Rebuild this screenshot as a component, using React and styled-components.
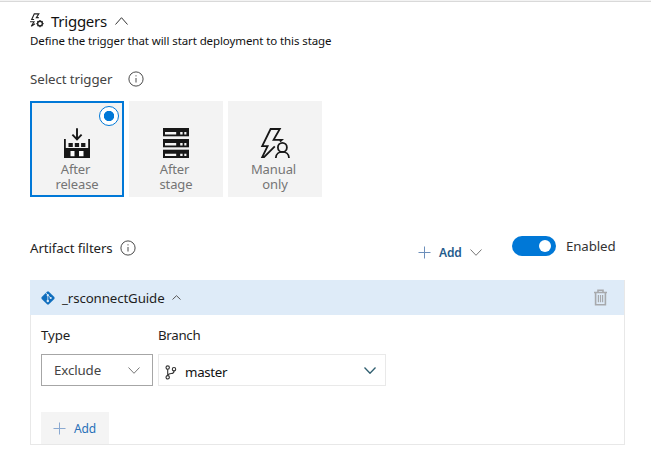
import React from "react";
import styled, { createGlobalStyle, css } from "styled-components";

const GlobalStyle = createGlobalStyle`
  *, *::before, *::after { box-sizing: border-box; }
  body { margin: 0; background: #fff; }
  button { font: inherit; border: 0; padding: 0; background: none; text-align: inherit; }
  svg { display: block; flex: none; }
`;

const Page = styled.main`
  height: 466px;
  overflow: hidden;
  padding: 0 26px 0 30px;
  border-top: 1px solid #f3f3f3;
  background: #fff;
  color: #1e1e1e;
  font: 13.3px/20px "Noto Sans", "Open Sans", sans-serif;
  box-shadow: inset 0 1px #d9d9d9;
`;

const Text = styled.span`
  flex: none;
  white-space: nowrap;
  font-size: ${(p) => p.$size || 13.3}px;
  letter-spacing: ${(p) => p.$track ?? -0.12}px;
  color: ${(p) => p.$color || "inherit"};
  font-weight: ${(p) => p.$weight || 400};
`;

const Heading = styled.header`
  display: flex;
  align-items: center;
  height: 39px;
  color: #111;
  ${Text} { margin: 0 8px 0 7px; }
`;

const Description = styled.p`
  margin: -10px 0 0;
  height: 20px;
  color: #111;
`;

const TriggerLabel = styled.div`
  display: flex;
  align-items: center;
  gap: 16px;
  height: 20px;
  margin-top: 19px;
`;

const Cards = styled.div`
  display: flex;
  gap: 5px;
  margin-top: 12px;
`;

const Card = styled.button`
  position: relative;
  display: flex;
  flex-direction: column;
  align-items: center;
  width: 94px;
  height: 96px;
  padding-top: 26px;
  background: #f3f3f3;
  color: #757575;
  text-align: center;
  line-height: 15px;
  ${(p) => p.$selected && css`box-shadow: inset 0 0 0 2px #0078d7;`}
`;

const CardLabel = styled.span`
  display: flex;
  flex-direction: column;
  align-items: center;
  margin-top: 4px;
  ${Text}:first-child { padding-right: 3px; }
`;

const Radio = styled.span`
  position: absolute;
  top: 5px;
  right: 5px;
  width: 20px;
  height: 20px;
  border: 1px solid #0078d7;
  border-radius: 50%;
  background: radial-gradient(circle, #0078d7 4.8px, #fff 5.5px);
`;

const FilterBar = styled.div`
  display: flex;
  align-items: center;
  height: 24px;
  margin-top: 39px;
`;

const FilterTitle = styled.div`
  display: flex;
  align-items: center;
  gap: 7px;
  width: 388px;
  margin-top: -1px;
`;

const AddMenu = styled.button`
  display: flex;
  align-items: center;
  width: 94px;
  margin-top: 8px;
  ${Text} { margin: 1px 8px 0 8px; }
`;

const Toggle = styled.button`
  width: 44px;
  height: 20px;
  margin: -4px 10px 0 0;
  padding: 4px 5px;
  border-radius: 10px;
  background: #0078d7;
`;

const Knob = styled.span`
  display: block;
  width: 12px;
  height: 12px;
  margin-left: auto;
  border-radius: 50%;
  background: #fff;
`;

const EnabledLabel = styled.span`
  display: flex;
  margin-top: -4px;
`;

const Panel = styled.section`
  height: 165px;
  margin-top: 20px;
  border: 1px solid #e8e8e8;
  border-top: 0;
`;

const PanelHeader = styled.header`
  display: flex;
  align-items: center;
  height: 35px;
  margin: 0 0 0 -1px;
  padding: 0 17px 0 11px;
  background: #deebf8;
`;

const HeaderName = styled.div`
  display: flex;
  align-items: center;
  gap: 7px;
  flex: 1;
`;

const Fields = styled.div`
  display: grid;
  grid-template-columns: 112px 228px;
  column-gap: 5px;
  row-gap: 9px;
  margin: 10px 0 0 10px;
`;

const Select = styled.button`
  display: flex;
  align-items: center;
  height: 32px;
  padding: ${(p) => (p.$quiet ? "0 9px 0 6px" : "0 12px 0 12px")};
  border: 1px solid ${(p) => (p.$quiet ? "#e9e9e9" : "#a6a6a6")};
  background: #fff;
`;

const Value = styled.span`
  display: flex;
  flex: 1;
  align-items: center;
  gap: 8px;
  padding-top: ${(p) => p.$drop || 0}px;
`;

const AddButton = styled.button`
  display: flex;
  align-items: center;
  gap: 8px;
  width: 68px;
  height: 32px;
  margin: 26px 0 0 10px;
  padding-left: 12px;
  background: #f4f4f4;
  ${Text} { padding-top: 2px; }
`;

function Chevron({ up, w = 12, h = 7, color = "#333", stroke = 1 }) {
  const d = up
    ? `M.5 ${h - 0.5}L${w / 2} .7L${w - 0.5} ${h - 0.5}`
    : `M.5 .5L${w / 2} ${h - 0.7}L${w - 0.5} .5`;
  return (
    <svg width={w} height={h} fill="none" stroke={color} strokeWidth={stroke}>
      <path d={d} />
    </svg>
  );
}

const Plus = ({ color = "#6c8fbb" }) => (
  <svg width="13" height="13" stroke={color} fill="none">
    <path d="M6.5 .5V12.5M.5 6.5H12.5" />
  </svg>
);

const Info = () => (
  <svg width="16" height="16" viewBox="0 0 16 16" fill="none" stroke="#4a4a4a">
    <circle cx="8" cy="8" r="7.1" />
    <path d="M8 7V11.5M8 4.3V5.4" />
  </svg>
);

const TriggerIcon = () => (
  <svg width="14" height="15" viewBox="0 0 14 15" fill="none" stroke="#222" strokeWidth="1.15">
    <path d="M4.1 6.5H1.7L4.3 .8H8.8L6.4 4.6H8.8M0 8.7H4L1.3 13.3L5 10.7" />
    <circle cx="10" cy="10.6" r="2.4" strokeWidth="1.4" />
    <path d="M10 7V8.2M10 13V14.2M6.4 10.6H7.6M12.4 10.6H13.6M7.5 8.1L8.2 8.8M11.8 12.4L12.5 13.1M12.5 8.1L11.8 8.8M8.2 12.4L7.5 13.1" />
  </svg>
);

const ReleaseIcon = () => (
  <svg width="26" height="31" viewBox="0 0 26 31">
    <path d="M13 1.3V12.3M8.4 7.7L13 12.3L17.6 7.7" fill="none" stroke="#171717" strokeWidth="1.9" />
    <path d="M0 12H1.8V21H24.2V12H26V31H0Z" fill="#171717" />
    <path d="M4.5 16H8.8V20H4.5ZM10.8 16H15.1V20H10.8ZM17.1 16H21.4V20H17.1Z" fill="#171717" />
    <path d="M6.5 24H10.5V29.3H6.5ZM15 24H19.5V29.3H15Z" fill="#fff" />
  </svg>
);

const StageIcon = () => (
  <svg width="26" height="31" viewBox="0 0 26 31">
    {[1, 12, 22.7].map((y) => (
      <g key={y}>
        <rect y={y} width="26" height="8.3" fill="#171717" />
        <path d={`M2 ${y + 5.2}H13.2M17.2 ${y + 5.2}H19.6M21.3 ${y + 5.2}H23.4`} stroke="#f4f4f4" strokeWidth="2.4" />
      </g>
    ))}
  </svg>
);

const ManualIcon = () => (
  <svg width="30" height="31" viewBox="0 0 30 31" fill="none" stroke="#171717" strokeWidth="1.8">
    <path d="M14.8 19.3L4 30.2H2.2L7.6 19.2H2.2L10.6 2H19.8L13.6 12.8H21.8L20 14.6" />
    <circle cx="22.4" cy="20.4" r="4.5" />
    <path d="M15.8 31C15.8 22.7 29 22.7 29 31" />
  </svg>
);

const GitIcon = () => (
  <svg width="14" height="14" viewBox="0 0 14 14">
    <path d="M6.1.7Q7 0 7.9.7L13.3 6.1Q14 7 13.3 7.9L7.9 13.3Q7 14 6.1 13.3L.7 7.9Q0 7 .7 6.1Z" fill="#106ebe" />
    <path d="M4.8 1.7L6.8 3.9V10M7 4.2L9.7 7" stroke="#deebf8" strokeWidth=".8" fill="none" />
    <circle cx="6.8" cy="4.2" r="1.1" fill="#deebf8" />
    <circle cx="6.8" cy="10" r="1.2" fill="#deebf8" />
    <circle cx="9.7" cy="7" r="1.1" fill="#deebf8" />
  </svg>
);

const TrashIcon = () => (
  <svg width="13" height="17" viewBox="0 0 13 17" fill="none" stroke="#a7a9ac" strokeWidth="1.6">
    <path d="M0 3.5H13M4 3V1.2H9V3M1.6 4V15.8H11.4V4" />
    <path d="M4.4 6V13.3M6.5 6V13.3M8.6 6V13.3" strokeWidth="1.2" />
  </svg>
);

const BranchIcon = () => (
  <svg width="12" height="15" viewBox="0 0 12 15" fill="none" stroke="#333" strokeWidth="1.1">
    <circle cx="2.7" cy="2.6" r="1.7" />
    <circle cx="2.7" cy="12.3" r="1.7" />
    <circle cx="9" cy="4.2" r="1.7" />
    <path d="M2.7 4.3V10.6M9 5.9Q9 8.5 6.2 8.5Q3.7 8.5 2.7 10.4" />
  </svg>
);

const triggers = [
  { icon: ReleaseIcon, lines: ["After", "release"], selected: true },
  { icon: StageIcon, lines: ["After", "stage"] },
  { icon: ManualIcon, lines: ["Manual", "only"] },
];

export default function App() {
  return (
    <>
      <GlobalStyle />
      <Page>
        <Heading>
          <TriggerIcon />
          <Text $size={15} $track={-0.25}>Triggers</Text>
          <Chevron up w={13} h={8} />
        </Heading>
        <Description>
          <Text $size={11.5} $track={-0.1}>Define the trigger that will start deployment to this stage</Text>
        </Description>
        <TriggerLabel>
          <Text $color="#444" $track={-0.08}>Select trigger</Text>
          <Info />
        </TriggerLabel>
        <Cards>
          {triggers.map(({ icon: Icon, lines, selected }) => (
            <Card key={lines.join(" ")} $selected={selected}>
              <Icon />
              <CardLabel>
                {lines.map((line) => <Text key={line} $size={13}>{line}</Text>)}
              </CardLabel>
              {selected && <Radio />}
            </Card>
          ))}
        </Cards>
        <FilterBar>
          <FilterTitle>
            <Text>Artifact filters</Text>
            <Info />
          </FilterTitle>
          <AddMenu>
            <Plus />
            <Text $size={12} $weight={600} $color="#245b8c">Add</Text>
            <Chevron color="#777" />
          </AddMenu>
          <Toggle aria-label="Artifact filters enabled"><Knob /></Toggle>
          <EnabledLabel><Text $color="#333">Enabled</Text></EnabledLabel>
        </FilterBar>
        <Panel>
          <PanelHeader>
            <HeaderName>
              <GitIcon />
              <Text>_rsconnectGuide</Text>
              <Chevron up w={9} h={5} color="#555" />
            </HeaderName>
            <TrashIcon />
          </PanelHeader>
          <Fields>
            <Text>Type</Text>
            <Text $track={-0.3}>Branch</Text>
            <Select>
              <Value><Text $color="#444">Exclude</Text></Value>
              <Chevron color="#777" />
            </Select>
            <Select $quiet>
              <Value $drop={4}>
                <BranchIcon />
                <Text $color="#111" $track={-0.3}>master</Text>
              </Value>
              <Chevron color="#315f70" stroke={1.3} />
            </Select>
          </Fields>
          <AddButton>
            <Plus color="#8aa9d1" />
            <Text $size={12} $color="#2870b8">Add</Text>
          </AddButton>
        </Panel>
      </Page>
    </>
  );
}
